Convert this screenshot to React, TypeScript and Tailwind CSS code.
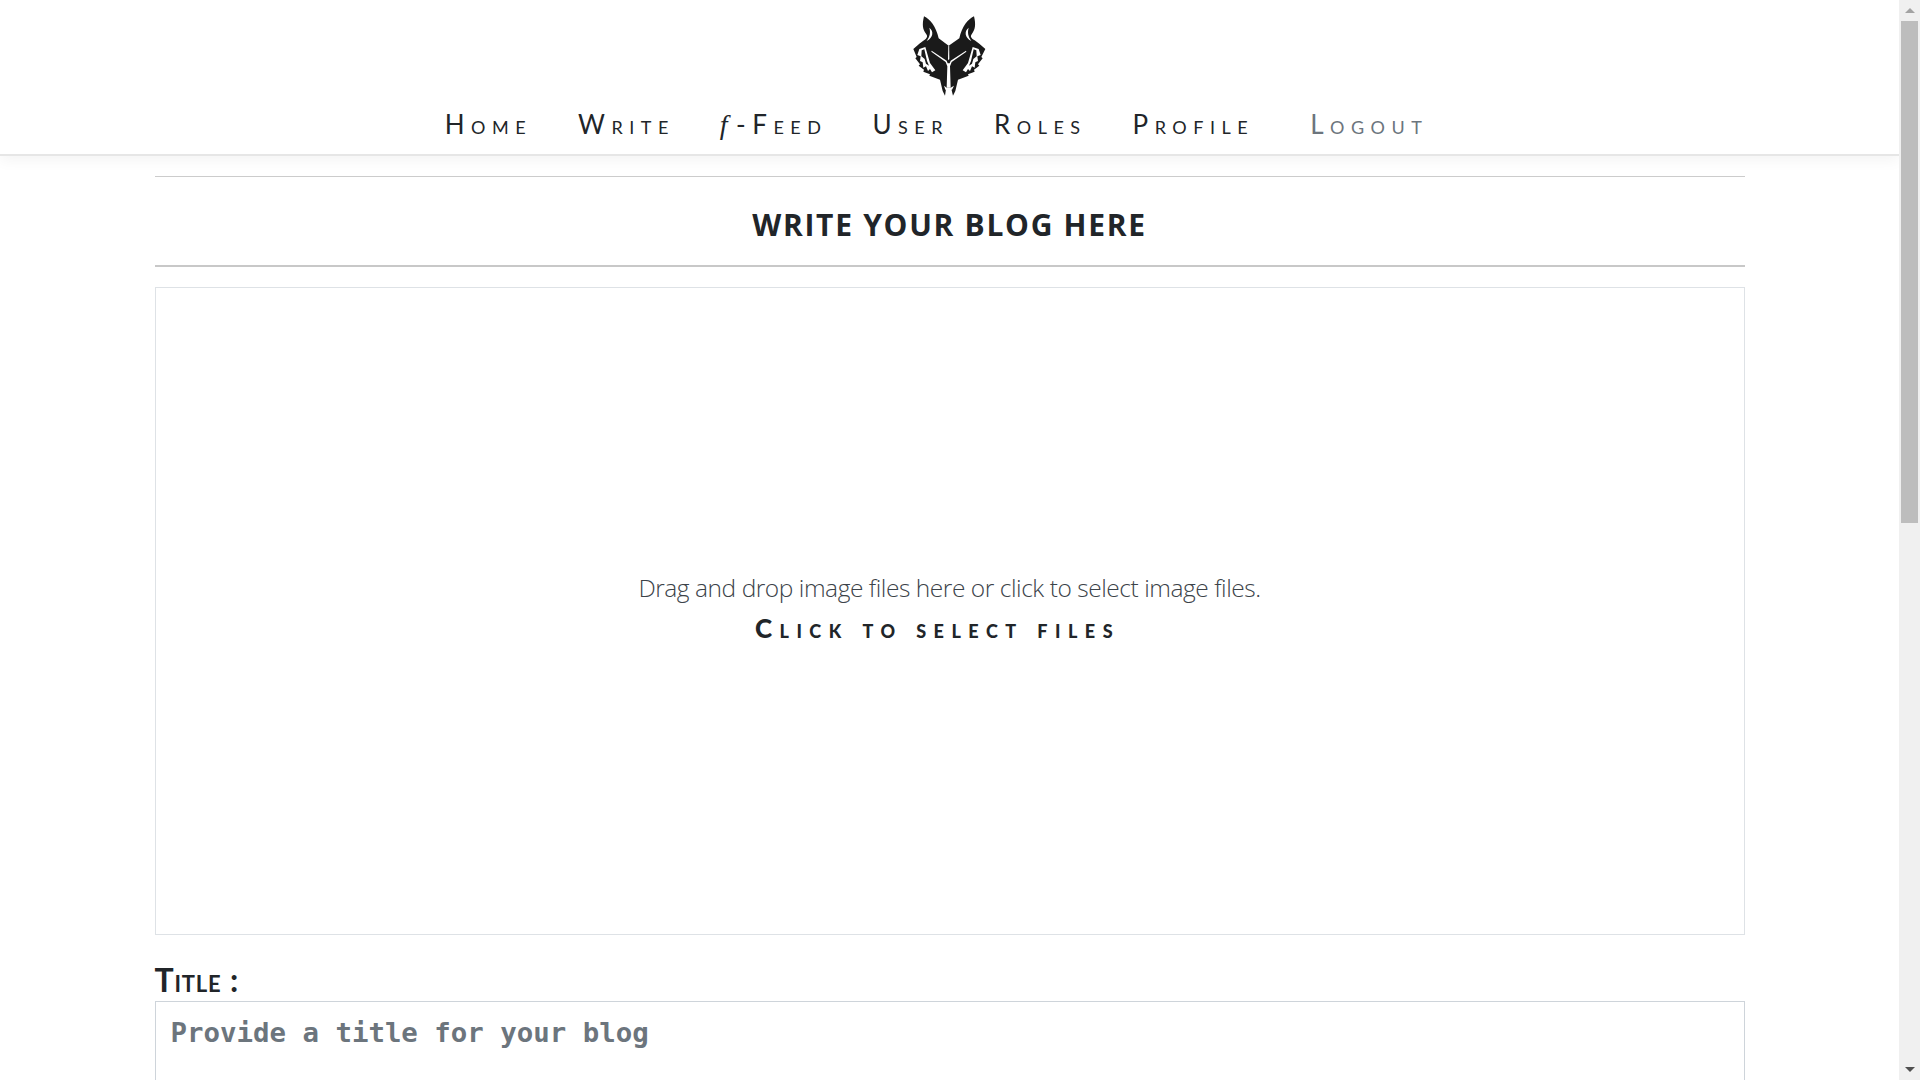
const open = '"Open Sans", "Liberation Sans", sans-serif';

function Logo() {
  return (
    <svg viewBox="90 35 240 270" className="w-[80px] h-[90px]" aria-label="logo">
      <path
        fill="#1a1a1a"
        d="M132 48 C150 56 168 78 176 114 L206 136 L238 114 C246 78 264 56 282 48 C288 72 286 88 276 100 C270 108 272 112 284 120 L298 130 L316 146 L304 170 L308 174 L294 192 L298 196 L282 208 L284 214 L264 222 L266 226 L234 238 L226 272 L219 286 L214 266 L198 266 L195 286 L188 272 L180 238 L148 226 L150 222 L130 214 L132 208 L116 196 L120 192 L106 174 L110 170 L100 146 L118 130 L132 120 C142 112 144 108 138 100 C128 88 126 72 132 48 Z"
      />
      <g fill="#fff">
        <path d="M148 82 C162 92 160 112 140 122 C150 108 152 96 148 82 Z" />
        <path d="M266 82 C252 92 254 112 274 122 C264 108 262 96 266 82 Z" />
        <path d="M205 136 L207.500 136 L208 176 L206 180 L204 176 Z" />
        <path d="M155 151 L200 181 L203 189 L209 189 L212 181 L258 151 L259 154 L215 185 L210 198 L212 262 L200 262 L202 198 L197 185 L154 154 Z" />
        <path fillRule="evenodd" d="M118 146 L136 140 L150 188 L166 210 L156 216 L150 206 L144 212 L138 198 L130 202 L128 186 L120 182 L122 168 L112 164 Z M125 150 L133 147 L141 182 L147 196 L138 190 L134 176 L124 168 Z" />
        <path fillRule="evenodd" d="M296 146 L278 140 L264 188 L248 210 L258 216 L264 206 L270 212 L276 198 L284 202 L286 186 L294 182 L292 168 L302 164 Z M289 150 L281 147 L273 182 L267 196 L276 190 L280 176 L290 168 Z" />
        <path d="M192 256 L200 262 L212 262 L222 256 L216 268 L196 268 Z" />
      </g>
    </svg>
  );
}

const navClass =
  "[font-variant-caps:small-caps] text-[26px] leading-[30px] tracking-[6.5px] font-normal";

export default function App() {
  return (
    <div className="flex h-screen w-full overflow-hidden bg-white" style={{ fontFamily: open }}>
      <div className="flex-1 min-w-0 h-full overflow-hidden bg-white flex flex-col">
        <header className="shrink-0 h-[156px] bg-white border-b-2 border-[#e6e6e6] shadow-[0_4px_14px_rgba(0,0,0,0.05)] flex flex-col items-center">
          <div className="pt-[12px] h-[109px]">
            <Logo />
          </div>
          <nav className="flex items-center h-[30px] text-[#212529] mr-[26px]" style={{ fontFamily: "Lato, sans-serif" }}>
            <span className={`${navClass} mr-[46px]`}>Home</span>
            <span className={`${navClass} mr-[45px]`}>Write</span>
            <span className={`${navClass} mr-[45px]`}>
              <span className="italic mr-[2px] [font-variant-caps:normal] text-[28px]" style={{ fontFamily: '"Liberation Serif", serif' }}>f</span>-Feed
            </span>
            <span className={`${navClass} mr-[45px]`}>User</span>
            <span className={`${navClass} mr-[46px]`}>Roles</span>
            <span className={`${navClass} mr-[56px]`}>Profile</span>
            <span className={`${navClass} text-[#6c757d]`}>Logout</span>
          </nav>
        </header>
        <main className="w-[1590px] mx-auto shrink-0">
          <div className="mt-[20px] border-t border-[#cccccc]" />
          <h1 className="h-[88px] flex items-center justify-center text-[30px] font-bold uppercase tracking-[1.7px] text-[#212529] pt-[7px]">
            Write your blog here
          </h1>
          <div className="border-t-[2px] border-[#c8c8c8]" />
          <div className="mt-[20px] h-[648px] border border-[#dee2e6] flex flex-col items-center pt-[281px]">
            <p className="text-[24.5px] leading-[38px] font-light text-[#3c4349] tracking-[-0.45px]">
              Drag and drop image files here or click to select image files.
            </p>
            <p
              className="mr-[24px] mt-[5px] [font-variant-caps:small-caps] text-[26px] leading-[32px] tracking-[7.5px] text-[#212529]"
              style={{ fontFamily: "Lato, sans-serif", fontWeight: 900 }}
            >
              Click to select files
            </p>
          </div>
          <label
            className="block mt-[24px] h-[42px] [font-variant-caps:small-caps] text-[32px] leading-[42px] font-bold tracking-[0.8px] text-[#212529]"
            style={{ fontFamily: "Lato, sans-serif" }}
          >
            Title :
          </label>
          <input
            placeholder="Provide a title for your blog"
            className="block w-full h-[120px] border border-[#ced4da] px-[15px] pb-[58px] text-[27.4px] font-bold bg-white placeholder:text-[#6c757d] outline-none"
            style={{ fontFamily: '"DejaVu Sans Mono", monospace' }}
          />
        </main>
      </div>
      <aside className="w-[21px] shrink-0 h-full bg-[#f0f0f0] flex flex-col items-center">
        <div className="h-[21px] w-full flex items-center justify-center">
          <div className="w-0 h-0 border-x-[5px] border-x-transparent border-b-[5px] border-b-[#a3a3a3]" />
        </div>
        <div className="w-[17px] h-[502px] bg-[#bdbdbd]" />
        <div className="flex-1" />
        <div className="h-[21px] w-full flex items-center justify-center">
          <div className="w-0 h-0 border-x-[5px] border-x-transparent border-t-[5px] border-t-[#505050]" />
        </div>
      </aside>
    </div>
  );
}
